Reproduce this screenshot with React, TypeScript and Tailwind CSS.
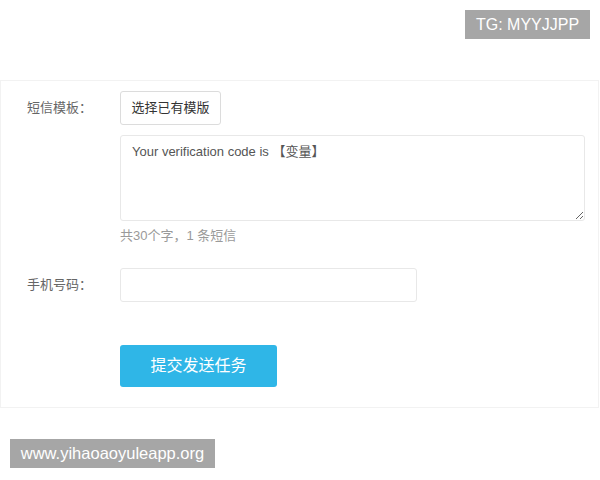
export default function App() {
  const font = "font-['Liberation_Sans','Noto_Sans_CJK_SC',sans-serif]";

  return (
    <div className={`w-[600px] h-[480px] bg-white overflow-hidden ${font}`}>
      {/* watermark top right */}
      <div className="flex justify-end pt-[10px] pr-[10px]">
        <div className="w-[125px] h-[29px] bg-[#a6a6a6] text-white text-[16px] flex items-center justify-center">
          TG: MYYJJPP
        </div>
      </div>

      {/* form panel */}
      <div className="mt-[41px] mr-[1px] border border-[#f2f2f2] pt-[10px] pb-[20px] pl-[26px]">
        <div className="flex items-center h-[34px]">
          <div className="w-[93px] text-[13px] text-[#666]">短信模板：</div>
          <button className="w-[101px] h-[34px] border border-[#dcdcdc] rounded-[3px] bg-white text-[13px] text-[#333]">
            选择已有模版
          </button>
        </div>

        <div className="flex mt-[10px]">
          <div className="w-[93px]" />
          <textarea
            className="w-[465px] h-[86px] border border-[#e8e8e8] rounded-[3px] px-[11px] py-[7px] text-[13px] leading-[18px] text-[#555] outline-none"
            defaultValue="Your verification code is 【变量】"
          />
        </div>

        <div className="flex mt-[7px]">
          <div className="w-[93px]" />
          <div className="text-[13px] leading-[16px] text-[#9a9a9a]">共30个字，1 条短信</div>
        </div>

        <div className="flex items-center mt-[24px]">
          <div className="w-[93px] text-[13px] text-[#666]">手机号码：</div>
          <input className="w-[297px] h-[34px] border border-[#e8e8e8] rounded-[3px] outline-none px-[10px]" />
        </div>

        <div className="flex mt-[43px]">
          <div className="w-[93px]" />
          <button className="w-[157px] h-[42px] rounded-[3px] bg-[#2fb6e7] text-white text-[16px]">
            提交发送任务
          </button>
        </div>
      </div>

      {/* watermark bottom left */}
      <div className="mt-[31px] ml-[10px] w-[205px] h-[29px] bg-[#a6a6a6] text-white text-[16.5px] flex items-center justify-center">
        www.yihaoaoyuleapp.org
      </div>
    </div>
  );
}
